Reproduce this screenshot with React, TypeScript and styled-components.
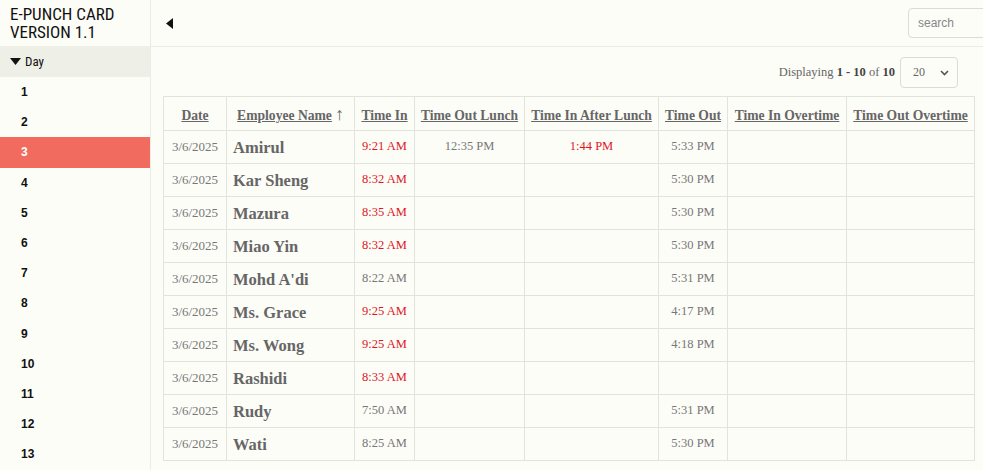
import React from "react";
import styled, { createGlobalStyle } from "styled-components";

const Global = createGlobalStyle`
  html, body { margin: 0; padding: 0; background: #fdfdf8; }
  body { font-family: "Liberation Serif", serif; }
  * { box-sizing: border-box; }
`;

const Page = styled.div`
  display: flex;
  width: 983px;
  height: 470px;
  overflow: hidden;
  background: #fdfdf8;
`;

const Sidebar = styled.aside`
  width: 151px;
  flex: none;
  border-right: 1px solid #ecece6;
  display: flex;
  flex-direction: column;
  background: #fdfdf8;
`;

const Brand = styled.div`
  height: 46px;
  padding: 5px 0 0 10px;
  font-family: "Liberation Sans Narrow", "Roboto Condensed", "Liberation Sans", sans-serif;
  font-size: 17px;
  line-height: 18px;
  color: #111;
`;

const BrandLine = styled.div`
  height: 18px;
  white-space: nowrap;
`;

const DayHeader = styled.div`
  height: 31px;
  display: flex;
  align-items: center;
  gap: 4px;
  padding-left: 10px;
  background: #eef0e8;
  font-family: "Liberation Sans Narrow", "Roboto Condensed", "Liberation Sans", sans-serif;
  font-size: 13px;
  color: #111;
`;

const DayItem = styled.div<{ $active?: boolean }>`
  height: 30.2px;
  display: flex;
  align-items: center;
  padding-left: 21px;
  font-family: "Liberation Sans", Arial, sans-serif;
  font-weight: bold;
  font-size: 12px;
  color: ${(p) => (p.$active ? "#fff" : "#111")};
  background: ${(p) => (p.$active ? "#f26b5f" : "transparent")};
`;

const Main = styled.main`
  flex: 1;
  display: flex;
  flex-direction: column;
  min-width: 0;
`;

const TopBar = styled.div`
  height: 47px;
  border-bottom: 1px solid #ecece6;
  display: flex;
  align-items: center;
  justify-content: space-between;
  padding-left: 15px;
`;

const Search = styled.input`
  width: 90px;
  height: 30px;
  margin-right: -15px;
  border: 1px solid #dcdcd6;
  border-radius: 4px;
  background: #fdfdf8;
  padding: 0 9px;
  font-family: "Liberation Sans", sans-serif;
  font-size: 12px;
  color: #555;
  outline: none;
  &::placeholder { color: #888; }
`;

const Content = styled.div`
  padding: 10px 9px 0 12px;
`;

const Pager = styled.div`
  display: flex;
  justify-content: flex-end;
  align-items: center;
  gap: 5px;
  padding-right: 16px;
  height: 31px;
  font-family: "Liberation Serif", serif;
  font-size: 12.5px;
  color: #666;
  b { color: #444; }
`;

const SelectBox = styled.div`
  width: 58px;
  height: 31px;
  border: 1px solid #dcdcd6;
  border-radius: 4px;
  display: flex;
  align-items: center;
  justify-content: space-between;
  padding: 0 8px 0 12px;
  font-size: 12px;
  color: #666;
`;

const Table = styled.table`
  margin-top: 8px;
  border-collapse: collapse;
  width: 811px;
  table-layout: fixed;
  font-family: "Liberation Serif", serif;
`;

const Th = styled.th`
  height: 34px;
  border: 1px solid #e3e3dd;
  font-size: 13.6px;
  font-weight: bold;
  color: #666;
  text-decoration: underline;
  text-align: center;
  padding: 4px 0 0;
  white-space: nowrap;
`;

const SortArrow = styled.span`
  font-size: 18px;
  font-weight: normal;
  text-decoration: none;
  display: inline-block;
  margin-left: 3px;
  line-height: 10px;
`;

const Td = styled.td<{ $red?: boolean; $size?: number }>`
  height: 33px;
  border: 1px solid #e3e3dd;
  font-size: ${(p) => p.$size || 12.5}px;
  color: ${(p) => (p.$red ? "#e0161e" : "#777")};
  text-align: center;
  vertical-align: top;
  padding: 8px 0 0;
  white-space: nowrap;
`;

const NameTd = styled.td`
  height: 33px;
  border: 1px solid #e3e3dd;
  font-size: 16.5px;
  font-weight: bold;
  color: #666;
  padding: 2px 0 0 6px;
  white-space: nowrap;
`;

const widths = [63, 128, 60, 110, 134, 69, 119, 128];
const headers = [
  "Date",
  "Employee Name",
  "Time In",
  "Time Out Lunch",
  "Time In After Lunch",
  "Time Out",
  "Time In Overtime",
  "Time Out Overtime",
];

type Row = {
  name: string;
  tin: string;
  tinLate: boolean;
  tol?: string;
  tial?: string;
  tout?: string;
};

const rows: Row[] = [
  { name: "Amirul", tin: "9:21 AM", tinLate: true, tol: "12:35 PM", tial: "1:44 PM", tout: "5:33 PM" },
  { name: "Kar Sheng", tin: "8:32 AM", tinLate: true, tout: "5:30 PM" },
  { name: "Mazura", tin: "8:35 AM", tinLate: true, tout: "5:30 PM" },
  { name: "Miao Yin", tin: "8:32 AM", tinLate: true, tout: "5:30 PM" },
  { name: "Mohd A'di", tin: "8:22 AM", tinLate: false, tout: "5:31 PM" },
  { name: "Ms. Grace", tin: "9:25 AM", tinLate: true, tout: "4:17 PM" },
  { name: "Ms. Wong", tin: "9:25 AM", tinLate: true, tout: "4:18 PM" },
  { name: "Rashidi", tin: "8:33 AM", tinLate: true },
  { name: "Rudy", tin: "7:50 AM", tinLate: false, tout: "5:31 PM" },
  { name: "Wati", tin: "8:25 AM", tinLate: false, tout: "5:30 PM" },
];

const days = Array.from({ length: 13 }, (_, i) => i + 1);

export default function App() {
  return (
    <>
      <Global />
      <Page>
        <Sidebar>
          <Brand>
            <BrandLine>E-PUNCH CARD</BrandLine>
            <BrandLine>VERSION 1.1</BrandLine>
          </Brand>
          <DayHeader>
            <svg width="11" height="7" viewBox="0 0 11 7">
              <path d="M0 0 L11 0 L5.5 7 Z" fill="#111" />
            </svg>
            Day
          </DayHeader>
          {days.map((d) => (
            <DayItem key={d} $active={d === 3}>
              {d}
            </DayItem>
          ))}
        </Sidebar>
        <Main>
          <TopBar>
            <svg width="7" height="11" viewBox="0 0 7 11">
              <path d="M7 0 L7 11 L0 5.5 Z" fill="#111" />
            </svg>
            <Search placeholder="search" />
          </TopBar>
          <Content>
            <Pager>
              <span>
                Displaying <b>1 - 10</b> of <b>10</b>
              </span>
              <SelectBox>
                <span>20</span>
                <svg width="9" height="6" viewBox="0 0 9 6">
                  <path d="M1 1 L4.5 4.5 L8 1" stroke="#555" strokeWidth="1.6" fill="none" />
                </svg>
              </SelectBox>
            </Pager>
            <Table>
              <colgroup>
                {widths.map((w, i) => (
                  <col key={i} style={{ width: w }} />
                ))}
              </colgroup>
              <thead>
                <tr>
                  {headers.map((h) => (
                    <Th key={h}>
                      {h}
                      {h === "Employee Name" && <SortArrow>↑</SortArrow>}
                    </Th>
                  ))}
                </tr>
              </thead>
              <tbody>
                {rows.map((r) => (
                  <tr key={r.name}>
                    <Td $size={13}>3/6/2025</Td>
                    <NameTd>{r.name}</NameTd>
                    <Td $red={r.tinLate}>{r.tin}</Td>
                    <Td>{r.tol || ""}</Td>
                    <Td $red>{r.tial || ""}</Td>
                    <Td>{r.tout || ""}</Td>
                    <Td />
                    <Td />
                  </tr>
                ))}
              </tbody>
            </Table>
          </Content>
        </Main>
      </Page>
    </>
  );
}
